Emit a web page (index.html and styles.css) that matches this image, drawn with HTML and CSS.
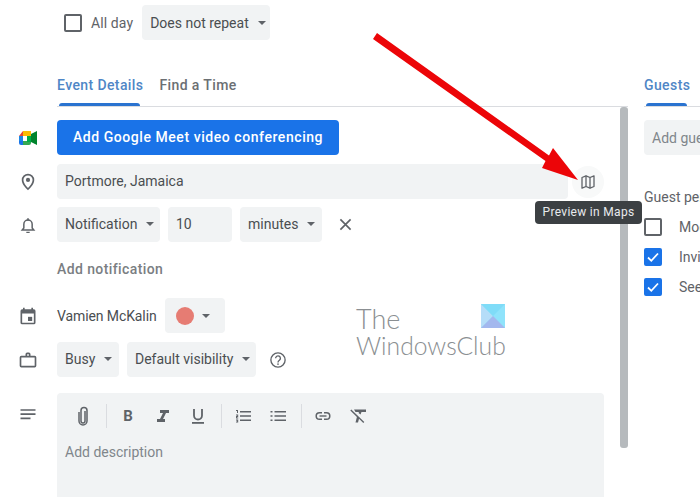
FILE: index.html
```html
<!DOCTYPE html>
<html lang="en">
<head>
<meta charset="utf-8">
<title>Event details</title>
<link rel="stylesheet" href="styles.css">
</head>
<body>
<div class="page">
  <div class="top-row">
    <span class="checkbox"></span>
    <span class="allday">All day</span>
    <div class="select repeat">Does not repeat<i class="caret"></i></div>
  </div>
  <div class="columns">
    <div class="main">
      <div class="tabs">
        <span class="tab active">Event Details</span>
        <span class="tab">Find a Time</span>
      </div>
      <div class="panel">
        <div class="form">
          <div class="row meet-row">
            <svg class="icon" viewBox="0 0 20 20"><path fill="#fbbc04" d="M5 3h8v5H5z"/><path fill="#ea4335" d="M5 3v5H1z"/><path fill="#1e88e5" d="M1 8h4v5H1z"/><path fill="#1a73e8" d="M1 13h4v4H3a2 2 0 0 1-2-2z"/><path fill="#34a853" d="M5 13h8v2a2 2 0 0 1-2 2H5z"/><path fill="#00832d" d="M13 6l6-3v14l-6-3z"/><path fill="#00ac47" d="M9 8h4v6H9z"/><path fill="#fff" d="M5 8h4v5H5z"/></svg>
            <div class="meet-btn">Add Google Meet video conferencing</div>
          </div>
          <div class="row loc-row">
            <svg class="icon" viewBox="0 0 24 24"><path fill="#5f6368" d="M12 2a7.500 7.500 0 0 0-7.500 7.600C4.500 14.500 9 19 12 22c3-3 7.500-7.500 7.500-12.400A7.500 7.500 0 0 0 12 2zm0 17.200c-2.600-2.800-5.500-6.200-5.500-9.600a5.500 5.500 0 0 1 11 0c0 3.400-2.900 6.800-5.500 9.600z"/><circle cx="12" cy="9.500" r="2.500" fill="#5f6368"/></svg>
            <div class="field location">Portmore, Jamaica</div>
            <span class="map-btn">
              <svg class="map-icon" viewBox="0 0 16 16"><path fill="none" stroke="#5f6368" stroke-width="1.300" stroke-linejoin="round" d="M2 3.500L6 1.800l4 1.700 4-1.700v10.700l-4 1.700-4-1.700-4 1.700z"/><path stroke="#5f6368" stroke-width="1.300" d="M6 1.800v10.700M10 3.500v10.700"/></svg>
            </span>
          </div>
          <div class="row notif-row">
            <svg class="icon" viewBox="0 0 24 24"><path fill="none" stroke="#5f6368" stroke-width="1.800" d="M5 18h14l-2-2.500V11a5 5 0 0 0-10 0v4.500z"/><path fill="#5f6368" d="M10 20h4v1.500h-4zM11 4h2v3h-2z"/></svg>
            <div class="select notif">Notification<i class="caret"></i></div>
            <div class="field num">10</div>
            <div class="select mins">minutes<i class="caret"></i></div>
            <svg class="close" viewBox="0 0 14 14"><path stroke="#5f6368" stroke-width="1.800" d="M1.500 1.500l11 11M12.500 1.500l-11 11"/></svg>
          </div>
          <div class="add-notif">Add notification</div>
          <div class="row owner-row">
            <svg class="icon" viewBox="0 0 24 24"><path fill="#5f6368" d="M19 4h-1V2h-2v2H8V2H6v2H5a2 2 0 0 0-2 2v14a2 2 0 0 0 2 2h14a2 2 0 0 0 2-2V6a2 2 0 0 0-2-2zm0 16H5V9h14z"/><path fill="#5f6368" d="M12 13h5v5h-5z"/></svg>
            <span class="owner">Vamien McKalin</span>
            <div class="select color"><i class="dot"></i><i class="caret"></i></div>
          </div>
          <div class="row busy-row">
            <svg class="icon" viewBox="0 0 24 24"><path fill="#5f6368" d="M20 7h-5V5a2 2 0 0 0-2-2h-2a2 2 0 0 0-2 2v2H4a2 2 0 0 0-2 2v10a2 2 0 0 0 2 2h16a2 2 0 0 0 2-2V9a2 2 0 0 0-2-2zM11 5h2v2h-2zm9 14H4V9h16z"/></svg>
            <div class="select busy">Busy<i class="caret"></i></div>
            <div class="select vis">Default visibility<i class="caret"></i></div>
            <svg class="help" viewBox="0 0 24 24"><circle cx="12" cy="12" r="9.500" fill="none" stroke="#5f6368" stroke-width="1.800"/><path fill="none" stroke="#5f6368" stroke-width="1.800" d="M8.800 9.800a3.200 3.200 0 1 1 5 2.600c-1.200.8-1.800 1.300-1.800 2.800"/><circle cx="12" cy="17.500" r="1.100" fill="#5f6368"/></svg>
          </div>
          <div class="row desc-row">
            <svg class="icon" viewBox="0 0 24 24"><path fill="#5f6368" d="M3 5h18v2H3zM3 10h18v2H3zM3 15h12v2H3z"/></svg>
            <div class="desc">
              <div class="toolbar">
                <svg class="tool clip" viewBox="0 0 12 20"><path fill="none" stroke="#5f6368" stroke-width="1.500" d="M8 5v10a2 2 0 0 1-4 0V4.500a3 3 0 0 1 6 0V15a4 4 0 0 1-8 0V6"/></svg>
                <i class="sep"></i>
                <b class="tool fmt">B</b>
                <svg class="tool" viewBox="0 0 16 16"><path fill="#5f6368" d="M5 2h9v3h-3L8 11h2v3H2v-3h3l3-6H5z"/></svg>
                <svg class="tool" viewBox="0 0 16 16"><path fill="none" stroke="#5f6368" stroke-width="1.800" d="M4 1v6.500a4 4 0 0 0 8 0V1"/><path fill="#5f6368" d="M2 14h12v1.800H2z"/></svg>
                <i class="sep"></i>
                <svg class="tool" viewBox="0 0 16 16"><path fill="#5f6368" d="M5 3h11v1.500H5zM5 7.300h11v1.500H5zM5 11.500h11V13H5zM1 2h2v3H2V3H1zM1 6.500h2.200V9H2v.6h1.200v.9H1V8h1.200v-.6H1zM1 11.500h2.200v3H1v-.8h1.200v-.3H1.600v-.7h.6v-.3H1z"/></svg>
                <svg class="tool" viewBox="0 0 16 16"><path fill="#5f6368" d="M4.500 3H16v1.500H4.500zM4.500 7.300H16v1.500H4.500zM4.500 11.500H16V13H4.500z"/><path fill="#5f6368" d="M.5 3h2v1.500h-2zM.5 7.300h2v1.500h-2zM.5 11.500h2V13h-2z"/></svg>
                <i class="sep"></i>
                <svg class="tool" viewBox="0 0 16 16"><path fill="none" stroke="#5f6368" stroke-width="1.500" d="M7 4.700H4.500a3.300 3.300 0 0 0 0 6.600H7M9 4.700h2.500a3.300 3.300 0 0 1 0 6.600H9"/><path fill="#5f6368" d="M4.500 7.300h7v1.400h-7z"/></svg>
                <svg class="tool" viewBox="0 0 16 16"><path fill="#5f6368" d="M4 1.500h12V4h-4.500l-1 2.500L8.500 5 9 4H5.500zM1.300 1.500l13 12.500-1 1L9 10.700 8 14.500H5.500l1.400-5.600L.3 2.500z"/></svg>
              </div>
              <div class="desc-text">Add description</div>
            </div>
          </div>
        </div>
        <div class="scrollbar"></div>
      </div>
    </div>
    <div class="side">
      <div class="tabs side-tabs"><span class="tab active">Guests</span></div>
      <div class="field guest">Add guests</div>
      <div class="perm-title">Guest permissions</div>
      <div class="perms">
        <div class="perm"><span class="checkbox"></span><span>Modify event</span></div>
        <div class="perm"><span class="checkbox on"><svg viewBox="0 0 18 18"><path fill="none" stroke="#fff" stroke-width="1.800" d="M4 9.500l3.300 3.300L14 5.500"/></svg></span><span>Invite others</span></div>
        <div class="perm"><span class="checkbox on"><svg viewBox="0 0 18 18"><path fill="none" stroke="#fff" stroke-width="1.800" d="M4 9.500l3.300 3.300L14 5.500"/></svg></span><span>See guest list</span></div>
      </div>
    </div>
  </div>

  <div class="tooltip">Preview in Maps</div>

  <div class="watermark">
    <div class="wm-the">The</div>
    <div class="wm-club">WindowsClub</div>
    <svg class="wm-logo" viewBox="0 0 24 24"><path fill="#8fe3fb" d="M0 0h24v24H0z"/><path fill="#b5ddf8" d="M0 0l12 12L0 24z"/><path fill="#a3b8ee" d="M0 24l12-12 12 12z"/><path fill="#7fdcf8" d="M0 0h24L12 12z"/></svg>
  </div>

  <svg class="arrow" viewBox="0 0 700 497"><path fill="#ec0508" d="M377 33L549 155.500l4-7.500 25 32-36-12 3.500-7L373 39z"/></svg>
</div>
</body>
</html>
```
FILE: styles.css
```css
* { box-sizing: border-box; }
html, body { margin: 0; padding: 0; background: #fff; }
.page {
  position: relative;
  width: 700px;
  height: 497px;
  overflow: hidden;
  font-family: Roboto, "Liberation Sans", sans-serif;
  font-size: 14px;
  color: #3c4043;
}
.top-row {
  display: flex;
  align-items: center;
  height: 35px;
  margin-top: 5px;
  padding-left: 64px;
}
.checkbox {
  display: block;
  flex: none;
  width: 18px;
  height: 18px;
  border: 2px solid #5f6368;
  border-radius: 2px;
}
.checkbox.on { background: #1a73e8; border-color: #1a73e8; }
.checkbox.on svg { display: block; width: 18px; height: 18px; margin: -2px; }
.allday { margin-left: 9px; color: #5f6368; letter-spacing: .1px; }
.select, .field {
  display: flex;
  align-items: center;
  height: 35px;
  flex: none;
  padding: 0 0 2px 8px;
  background: #f1f3f4;
  border-radius: 4px;
  color: #4a4e51;
}
.caret {
  display: block;
  width: 0;
  height: 0;
  margin-left: 9px;
  border-left: 4px solid transparent;
  border-right: 4px solid transparent;
  border-top: 4px solid #5f6368;
}
.repeat { width: 128px; margin-left: 9px; padding-bottom: 0; }
.columns { display: flex; padding-top: 33px; }
.main { margin-left: 57px; flex: none; width: 571px; }
.tabs {
  display: flex;
  gap: 16px;
  height: 34px;
  padding-top: 4px;
  border-bottom: 1px solid #dadce0;
}
.tab {
  position: relative;
  font-weight: 500;
  font-size: 14px;
  letter-spacing: .4px;
  color: #6b6f73;
  line-height: 16px;
}
.tab.active { color: #4f86c6; }
.tab.active::after {
  content: "";
  position: absolute;
  left: 2px;
  right: 3px;
  bottom: 0;
  height: 3px;
  background: #2a73d0;
  border-radius: 3px 3px 0 0;
}
.panel { display: flex; justify-content: space-between; }
.form { width: 547px; padding-top: 13px; }
.row { display: flex; align-items: center; position: relative; }
.icon {
  position: absolute;
  left: -39px;
  top: 50%;
  width: 20px;
  height: 20px;
  margin-top: -10px;
}
.meet-row { height: 35px; }
.meet-btn {
  width: 282px;
  height: 35px;
  border-radius: 4px;
  background: #1a73e8;
  color: #fff;
  font-weight: 500;
  font-size: 14px;
  letter-spacing: .56px;
  line-height: 35px;
  text-align: center;
}
.loc-row { margin-top: 9px; height: 35px; }
.location { width: 511px; }
.map-btn {
  display: flex;
  align-items: center;
  justify-content: center;
  width: 32px;
  height: 32px;
  margin-left: 4px;
  border-radius: 50%;
  background: #f8f9f9;
}
.map-icon { width: 16px; height: 16px; }
.notif-row { margin-top: 8px; height: 35px; }
.notif { width: 103px; }
.num { width: 64px; margin-left: 8px; }
.mins { width: 82px; margin-left: 8px; }
.close { width: 13px; height: 13px; margin-left: 17px; }
.add-notif {
  margin-top: 19px;
  height: 16px;
  line-height: 16px;
  font-weight: 500;
  font-size: 14px;
  letter-spacing: .4px;
  color: #7a7e82;
}
.owner-row { margin-top: 21px; height: 35px; }
.owner { color: #4a4e51; letter-spacing: -.1px; }
.color { width: 60px; margin-left: 8px; padding: 0 0 0 11px; }
.dot { display: block; width: 18px; height: 18px; border-radius: 50%; background: #e67c73; }
.color .caret { margin-left: 8px; }
.busy-row { margin-top: 9px; height: 35px; }
.busy { width: 62px; }
.vis { width: 129px; margin-left: 8px; }
.help { width: 18px; height: 18px; margin-left: 13px; }
.desc-row { margin-top: 16px; align-items: flex-start; }
.desc-row .icon { top: 12px; margin-top: 0; }
.desc {
  width: 547px;
  height: 104px;
  border-radius: 4px 4px 0 0;
  background: #f1f3f4;
  padding-left: 8px;
}
.toolbar { display: flex; align-items: center; height: 46px; padding-left: 12px; }
.tool { display: block; flex: none; width: 16px; height: 16px; margin-right: 19px; }
.clip { width: 12px; height: 20px; margin-right: 21px; }
.fmt { font: 700 15px/16px Roboto, sans-serif; color: #5f6368; text-align: center; }
.sep { display: block; flex: none; width: 1px; height: 24px; background: #dadce0; margin-right: 13px; margin-left: -4px; }
.desc-text { margin-top: 5px; color: #80868b; }
.scrollbar {
  width: 8px;
  height: 341px;
  border-radius: 3px;
  background: #b6babd;
}
.side { margin-left: 16px; width: 56px; flex: none; white-space: nowrap; }
.side-tabs { width: 120px; }
.guest { width: 120px; margin-top: 13px; padding-bottom: 0; color: #80868b; }
.perm-title { margin-top: 34px; height: 16px; line-height: 16px; color: #5f6368; }
.perms { display: flex; flex-direction: column; gap: 12px; margin-top: 13px; }
.perm { display: flex; align-items: center; gap: 17px; height: 18px; color: #5f6368; }
.tooltip {
  position: absolute;
  left: 535px;
  top: 201px;
  width: 107px;
  height: 23px;
  border-radius: 4px;
  background: #3c4043;
  color: #e8eaed;
  font-size: 12px;
  letter-spacing: .3px;
  line-height: 23px;
  text-align: center;
}
.watermark {
  position: absolute;
  left: 356px;
  top: 304px;
  width: 150px;
  height: 54px;
  font-family: Lato, sans-serif;
  font-weight: 300;
  color: #8b8f92;
}
.wm-the { font-size: 27px; line-height: 29px; }
.wm-club { font-size: 24.700px; line-height: 25px; }
.wm-logo { position: absolute; right: 1px; top: 0; width: 24px; height: 24px; }
.arrow { position: absolute; left: 0; top: 0; width: 700px; height: 497px; pointer-events: none; }
```
